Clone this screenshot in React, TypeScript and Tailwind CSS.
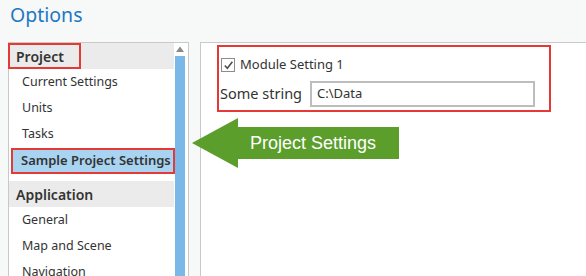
import React from 'react';

const font = { fontFamily: '"Noto Sans", "Open Sans", sans-serif' };

function Header({ label, boxed }: { label: string; boxed?: boolean }) {
  return (
    <div className="h-[26px] bg-[#ebebeb] flex items-center">
      {boxed ? (
        <span className="-ml-[1px] h-[26px] w-[73px] border-2 border-[#e53935] flex items-center pl-[6px] text-[14px] font-semibold text-[#333]">
          {label}
        </span>
      ) : (
        <span className="pl-[7px] text-[14px] font-semibold text-[#333]">{label}</span>
      )}
    </div>
  );
}

function Item({ label }: { label: string }) {
  return <div className="h-[26px] flex items-center pl-[13px] text-[12.5px] text-[#333]">{label}</div>;
}

export default function App() {
  return (
    <div className="w-[586px] h-[276px] bg-[#f7f8f8] overflow-hidden relative" style={font}>
      {/* title */}
      <div className="h-[42px] pl-[10px] pt-[1px] text-[19.5px] leading-[28px] text-[#1e78c4]">Options</div>

      <div className="flex h-[234px]">
        {/* category list */}
        <div className="ml-[8px] w-[181px] h-[260px] bg-white border-l border-t border-r border-[#c9c9c9] flex">
          <div className="w-[165px] flex flex-col">
            <Header label="Project" boxed />
            <Item label="Current Settings" />
            <Item label="Units" />
            <Item label="Tasks" />
            <div className="ml-[2px] mt-[1px] h-[26px] w-[164px] bg-[#a8d4f2] border-2 border-[#e53935] flex items-center pl-[8px] text-[13px] font-semibold text-[#333] whitespace-nowrap">
              Sample Project Settings
            </div>
            <div className="h-[7px]" />
            <Header label="Application" />
            <Item label="General" />
            <Item label="Map and Scene" />
            <Item label="Navigation" />
          </div>
          <div className="ml-[1px] w-[10px] flex flex-col items-center">
            <svg width="10" height="13" viewBox="0 0 10 13" className="block">
              <path d="M1 9 L5 3.5 L9 9 Z" fill="#8a8a8a" />
            </svg>
            <div className="w-[10px] flex-1 bg-[#7ab9e7]" />
          </div>
        </div>

        {/* settings page */}
        <div className="ml-[11px] flex-1 bg-white border-l border-t border-[#c9c9c9]">
          <div className="ml-[16px] mt-[2px] w-[334px] h-[67px] border-2 border-[#e53935]">
            <div className="flex items-center h-[30px] pt-[6px] pl-[2px]">
              <div className="w-[14px] h-[14px] border border-[#8c8c8c] bg-white flex items-center justify-center">
                <svg width="11" height="11" viewBox="0 0 11 11">
                  <path d="M1.8 5.6 L4.3 8.3 L9.4 1.8" fill="none" stroke="#4a4a4a" strokeWidth="1.5" />
                </svg>
              </div>
              <span className="ml-[5px] text-[13px] text-[#333]">Module Setting 1</span>
            </div>
            <div className="flex items-center h-[33px] pl-[1px]">
              <span className="text-[14.5px] text-[#333] w-[90px]">Some string</span>
              <div className="w-[225px] h-[26px] border-2 border-[#bdbdbd] bg-white flex items-center pl-[5px] text-[13px] text-[#333]">
                C:\Data
              </div>
            </div>
          </div>
        </div>
      </div>

      {/* annotation arrow */}
      <div className="absolute left-[192px] top-[118px] flex items-center">
        <svg width="46" height="50" viewBox="0 0 46 50" className="block">
          <path d="M0 25 L46 0 L46 50 Z" fill="#5b9e2b" />
        </svg>
        <div
          className="w-[161px] h-[32px] bg-[#5b9e2b] flex items-center pl-[12px] text-[18px] text-white"
          style={{ fontFamily: '"Liberation Sans", Arial, sans-serif' }}
        >
          Project Settings
        </div>
      </div>
    </div>
  );
}
